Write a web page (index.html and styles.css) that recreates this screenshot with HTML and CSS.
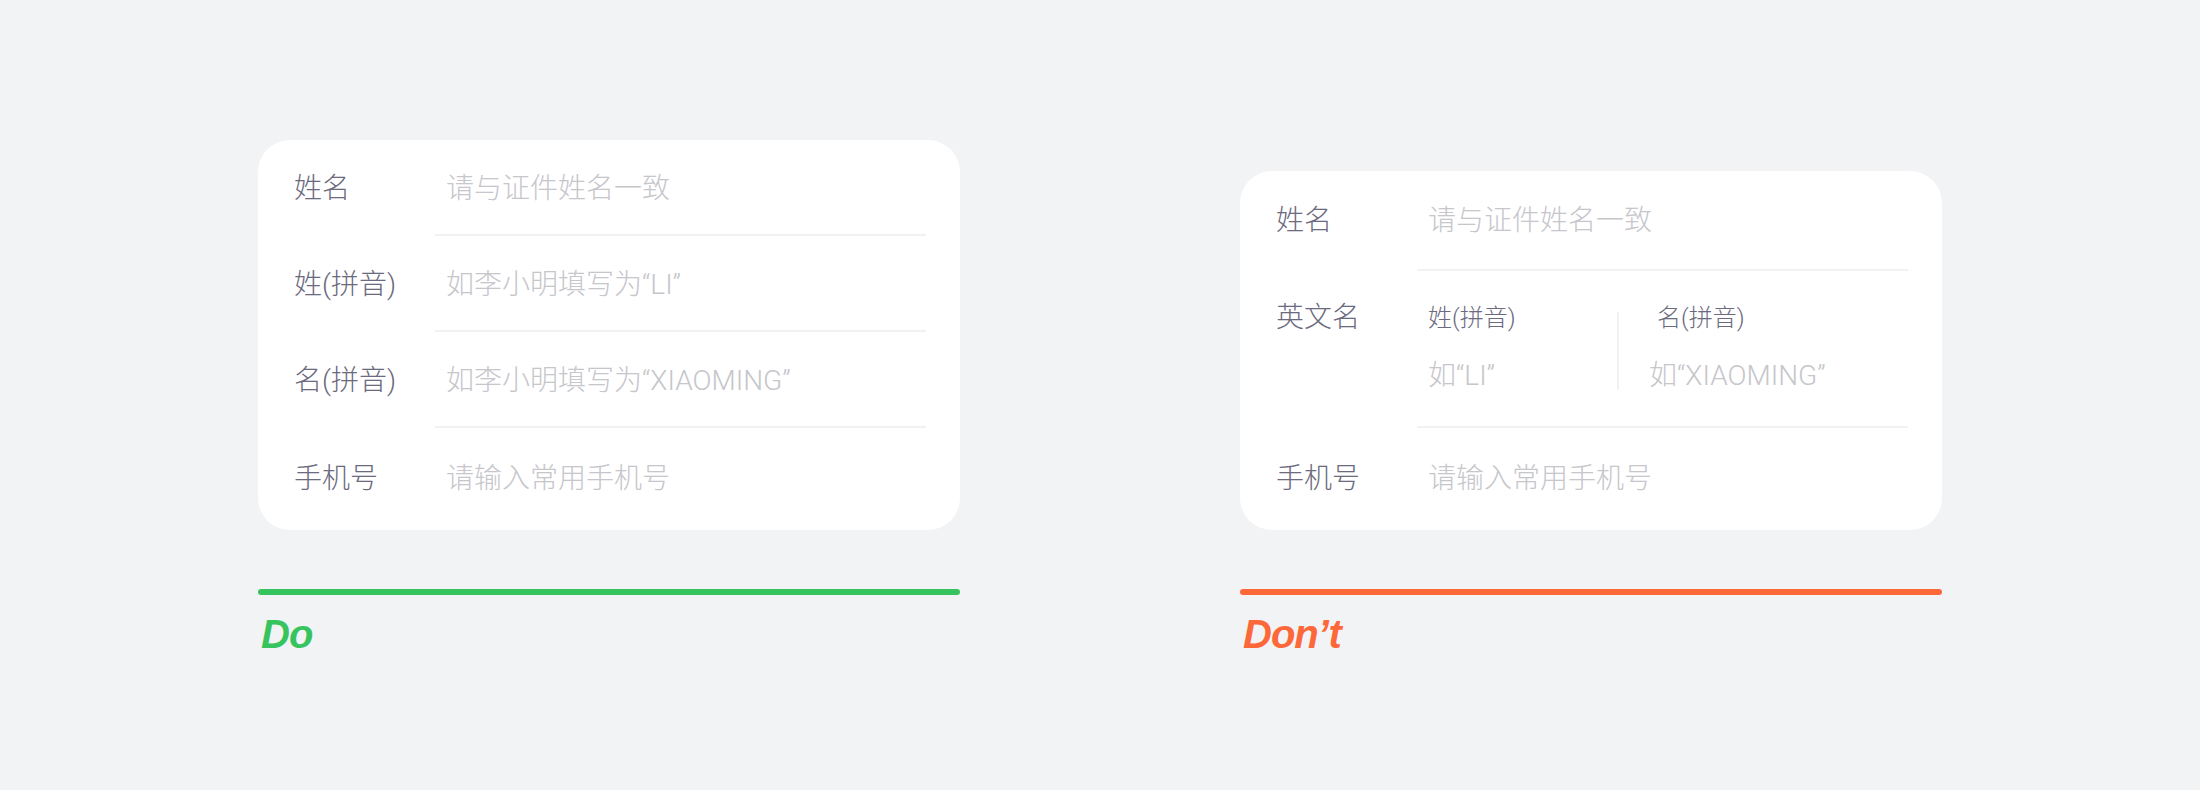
FILE: index.html
```html
<!DOCTYPE html>
<html lang="zh-CN">
<head>
    <meta charset="UTF-8">
    <meta name="viewport" content="width=device-width, initial-scale=1.0">
    <title>姓名填写 Do / Don't</title>

    <link rel="stylesheet" href="styles.css">
</head>
<body>
    <main class="compare">
        <!-- Do: one field per line -->
        <section class="case">
            <div class="card">
                <div class="row">
                    <span class="label">姓名</span>
                    <div class="field">请与证件姓名一致</div>
                </div>
                <div class="row">
                    <span class="label">姓(拼音)</span>
                    <div class="field">如李小明填写为“LI”</div>
                </div>
                <div class="row">
                    <span class="label">名(拼音)</span>
                    <div class="field">如李小明填写为“XIAOMING”</div>
                </div>
                <div class="row">
                    <span class="label">手机号</span>
                    <div class="field">请输入常用手机号</div>
                </div>
            </div>
            <div class="bar bar-do"></div>
            <p class="verdict verdict-do">Do</p>
        </section>

        <!-- Don't: two fields squeezed into one row -->
        <section class="case">
            <div class="card card-split">
                <div class="row">
                    <span class="label">姓名</span>
                    <div class="field">请与证件姓名一致</div>
                </div>
                <div class="row row-name">
                    <span class="label">英文名</span>
                    <div class="field">
                        <div class="name-part">
                            <div class="sub-label">姓(拼音)</div>
                            <div class="sub-hint">如“LI”</div>
                        </div>
                        <div class="split"></div>
                        <div class="name-part name-part-last">
                            <div class="sub-label">名(拼音)</div>
                            <div class="sub-hint">如“XIAOMING”</div>
                        </div>
                    </div>
                </div>
                <div class="row">
                    <span class="label">手机号</span>
                    <div class="field">请输入常用手机号</div>
                </div>
            </div>
            <div class="bar bar-dont"></div>
            <p class="verdict verdict-dont">Don’t</p>
        </section>
    </main>
</body>
</html>
```

FILE: styles.css
```css
body {
    margin: 0;
    background-color: #f2f3f5;
    font-family: Roboto, "Noto Sans CJK SC", sans-serif;
    font-weight: 300;
}
.compare {
    display: flex;
    justify-content: center;
    align-items: flex-end;
    gap: 280px;
    padding-top: 140px;
}
.case {
    width: 702px;
}
.card {
    background-color: #fff;
    border-radius: 32px;
    padding: 0 34px 0 36px;
}
.row {
    display: flex;
}
.label {
    width: 141px;
    flex-shrink: 0;
    padding-top: 35px;
    font-size: 28px;
    line-height: 28px;
    color: #6b6a7e;
}
.field {
    flex: 1;
    padding: 35px 0 31px 11px;
    border-bottom: 2px solid #f2f2f4;
    font-size: 28px;
    line-height: 28px;
    color: #c6c6cb;
}
.row:last-child .label,
.row:last-child .field {
    padding-top: 37px;
}
.row:last-child .field {
    padding-bottom: 37px;
    border-bottom: 0;
}

/* split card */
.card-split .row:first-child .label,
.card-split .row:first-child .field {
    padding-top: 36px;
}
.card-split .row:first-child .field {
    padding-bottom: 34px;
}
.row-name .label {
    padding-top: 33px;
}
.row-name .field {
    display: flex;
    padding-top: 33px;
    padding-bottom: 36px;
}
.name-part {
    width: 189px;
}
.name-part-last {
    width: auto;
    padding-left: 30px;
}
.name-part-last .sub-label {
    padding-left: 8px;
}
.split {
    width: 2px;
    margin-top: 8px;
    background-color: #f2f2f4;
}
.sub-label {
    font-size: 24px;
    line-height: 28px;
    color: #6b6a7e;
}
.sub-hint {
    margin-top: 30px;
}

/* verdict */
.bar {
    height: 6px;
    margin-top: 59px;
    border-radius: 3px;
}
.bar-do {
    background-color: #37c45e;
}
.bar-dont {
    background-color: #fd683a;
}
.verdict {
    margin: 19px 0 0;
    padding-left: 3px;
    font: italic 700 40px/40px "Liberation Sans", Arial, sans-serif;
    letter-spacing: -1px;
}
.verdict-do {
    color: #37c45e;
}
.verdict-dont {
    color: #fd683a;
}
```
